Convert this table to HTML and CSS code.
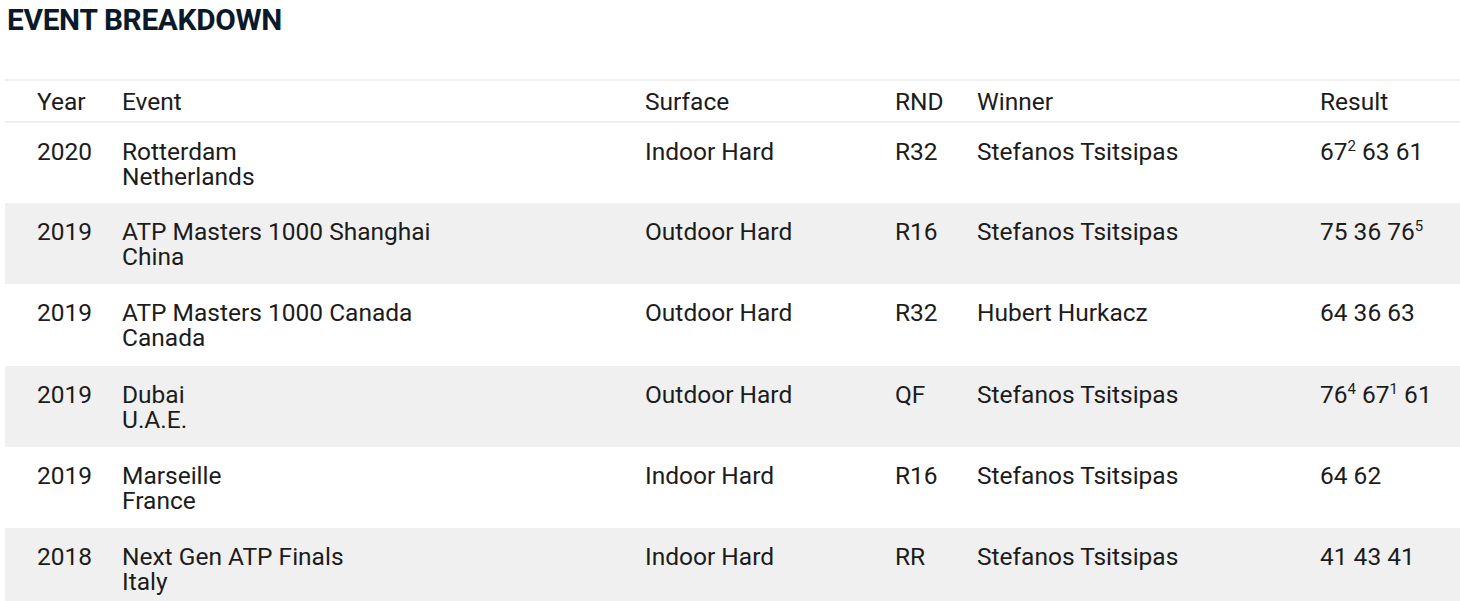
FILE: index.html
```html
<!DOCTYPE html>
<html>
<head>
<meta charset="utf-8">
<link rel="stylesheet" href="styles.css">
</head>
<body>
<h2 class="title">EVENT BREAKDOWN</h2>
<table class="breakdown">
<thead>
<tr><th class="c-year">Year</th><th class="c-event">Event</th><th class="c-surface">Surface</th><th class="c-rnd">RND</th><th class="c-winner">Winner</th><th class="c-result">Result</th></tr>
</thead>
<tbody>
<tr><td>2020</td><td>Rotterdam<br>Netherlands</td><td>Indoor Hard</td><td>R32</td><td>Stefanos Tsitsipas</td><td>67<sup>2</sup> 63 61</td></tr>
<tr class="alt"><td>2019</td><td>ATP Masters 1000 Shanghai<br>China</td><td>Outdoor Hard</td><td>R16</td><td>Stefanos Tsitsipas</td><td>75 36 76<sup>5</sup></td></tr>
<tr><td>2019</td><td>ATP Masters 1000 Canada<br>Canada</td><td>Outdoor Hard</td><td>R32</td><td>Hubert Hurkacz</td><td>64 36 63</td></tr>
<tr class="alt"><td>2019</td><td>Dubai<br>U.A.E.</td><td>Outdoor Hard</td><td>QF</td><td>Stefanos Tsitsipas</td><td>76<sup>4</sup> 67<sup>1</sup> 61</td></tr>
<tr><td>2019</td><td>Marseille<br>France</td><td>Indoor Hard</td><td>R16</td><td>Stefanos Tsitsipas</td><td>64 62</td></tr>
<tr class="alt"><td>2018</td><td>Next Gen ATP Finals<br>Italy</td><td>Indoor Hard</td><td>RR</td><td>Stefanos Tsitsipas</td><td>41 43 41</td></tr>
</tbody>
</table>
</body>
</html>
```
FILE: styles.css
```css
html, body {
  margin: 0;
  padding: 0;
  background: #ffffff;
}
body {
  padding: 0 0 0 5px;
  font-family: Roboto, "Liberation Sans", sans-serif;
  color: #1c1c1c;
}
.title {
  margin: 0;
  padding: 3px 0 0 2px;
  height: 79px;
  box-sizing: border-box;
  font-size: 29.8px;
  line-height: 34px;
  font-weight: 700;
  color: #0b1a2a;
  letter-spacing: -0.3px;
}
.breakdown {
  width: 1455px;
  border-collapse: collapse;
  border-top: 2px solid #efefef;
  font-size: 24.5px;
  line-height: 25px;
}
.breakdown th {
  font-weight: 400;
  text-align: left;
  height: 40px;
  padding: 0;
  border-bottom: 2px solid #efefef;
  vertical-align: middle;
}
.breakdown td {
  height: 81.2px;
  padding: 16px 0 0 0;
  box-sizing: border-box;
  vertical-align: top;
}
.breakdown tr.alt td {
  background: #f0f0f0;
}
.breakdown th:first-child, .breakdown td:first-child { padding-left: 32px; }
.c-year { width: 85px; }
.c-event { width: 523px; }
.c-surface { width: 250px; }
.c-rnd { width: 82px; }
.c-winner { width: 343px; }
sup {
  font-size: 15px;
  line-height: 0;
  vertical-align: 9px;
}
```
